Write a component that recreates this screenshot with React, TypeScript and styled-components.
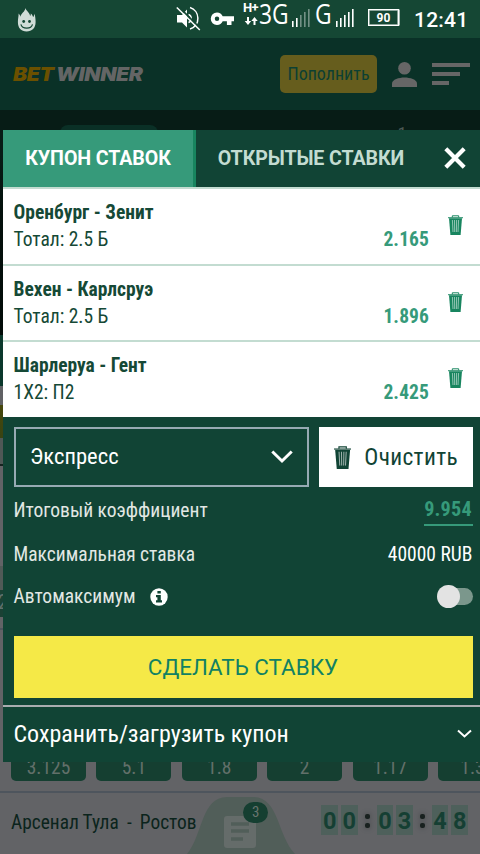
import React from "react";
import styled, { createGlobalStyle, css } from "styled-components";

const condensed = "'Roboto Condensed', Roboto, sans-serif";

const GlobalStyle = createGlobalStyle`
  * { box-sizing: border-box; }
  body { margin: 0; overflow: hidden; background: #626366; }
  button { font: inherit; border: 0; padding: 0; background: none; cursor: pointer; }
`;

const Screen = styled.div`
  position: relative;
  display: flex;
  flex-direction: column;
  width: 480px;
  height: 854px;
  overflow: hidden;
  background: #626366;
  font-family: ${condensed};
  font-size: 19.5px;
  line-height: 24px;
  white-space: nowrap;
`;

/* ---------- status bar ---------- */

const StatusBar = styled.div`
  display: flex;
  align-items: flex-start;
  flex: none;
  height: 38px;
  background: #154734;
  color: #fff;

  svg { flex: none; display: block; }
`;

const StatusItem = styled.div<{ $left: number; $top: number; $width: number }>`
  flex: none;
  width: ${(p) => p.$width}px;
  margin-left: ${(p) => p.$left}px;
  margin-top: ${(p) => p.$top}px;
`;

const Network = styled(StatusItem)`
  font: 400 26.5px/28px "Open Sans", sans-serif;
  transform: scaleX(0.86);
  transform-origin: left;
`;

const DataType = styled(StatusItem)`
  font: 700 13px/13px Roboto, sans-serif;
  letter-spacing: -0.6px;
`;

const Battery = styled(StatusItem)`
  height: 17px;
  border: 1px solid #fff;
  box-shadow: inset 0 0 0 0.7px #b5c6be, 1.5px 0 0 -0.5px #a8bcb3;
  font: 700 12px/16px Roboto, sans-serif;
  letter-spacing: 0.2px;
  text-align: center;
`;

const Clock = styled(StatusItem)`
  font: 500 21px/24px Roboto, sans-serif;
  letter-spacing: 0.2px;
`;

/* ---------- dimmed page ---------- */

const Header = styled.header`
  display: flex;
  align-items: center;
  flex: none;
  height: 72px;
  padding: 0 10px 0 13px;
  background: #0a3127;
`;

const Logo = styled.div`
  flex: 1;
  padding-top: 1px;
  color: #646565;
  font: italic 900 19px/24px Inter, sans-serif;
  letter-spacing: -0.35px;
  transform: scaleX(1.115);
  transform-origin: left;

  span { color: #6b5000; margin-right: 2px; }
`;

const Deposit = styled.button`
  width: 97px;
  height: 38px;
  border-radius: 5px;
  background: #665d1d;
  color: #0c4033;
  font-size: 18px;
  line-height: 38px;
`;

const PersonIcon = styled.svg`
  margin: 0 15px;
`;

const MenuBars = styled.div`
  display: flex;
  flex-direction: column;
  gap: 5px;
  width: 38px;
`;

const Bar = styled.i<{ $width: number }>`
  width: ${(p) => p.$width}px;
  height: 4px;
  background: #666;
`;

const SportStrip = styled.div`
  display: flex;
  justify-content: space-between;
  flex: none;
  height: 225px;
  padding: 15px 73px 0 60px;
  background: linear-gradient(#071c16 0 20%, #03100c 45%, #020b08);
`;

const SportChip = styled.div`
  width: 98px;
  height: 24px;
  border-radius: 8px;
  background: #0a3026;
`;

const SportMark = styled.span`
  color: #4b5854;
  font-size: 19px;
  line-height: 17px;
`;

const Band = styled.div<{ $height: number; $color: string }>`
  flex: none;
  height: ${(p) => p.$height}px;
  background: ${(p) => p.$color};
`;

const HiddenOdd = styled(Band)`
  color: #5f706a;
  line-height: 26px;
  text-indent: -2px;
`;

const OddsRow = styled.div`
  display: flex;
  gap: 10.4px;
  flex: none;
  padding: 0 0 10px 11px;
  border-bottom: 2px solid #4e555d;
`;

const Odd = styled.div`
  flex: none;
  width: 75px;
  height: 38px;
  border-radius: 5px;
  background: #153f31;
  color: #62706a;
  line-height: 49px;
  text-align: center;

  &:last-child { text-indent: -6px; }
`;

const MatchBar = styled.div`
  display: flex;
  justify-content: space-between;
  flex: 1;
  padding: 0 12px 0 11px;
`;

const Teams = styled.div`
  width: 176px;
  padding-top: 18px;
  color: #0b241c;
  font-size: 19.4px;
  word-spacing: -0.4px;
  white-space: pre;
`;

const CouponTab = styled.div`
  position: relative;
  width: 108px;
  margin: 4px 26px 0 0;

  svg { display: block; }
`;

const CouponCount = styled.span`
  position: absolute;
  left: 56px;
  top: 5px;
  width: 25px;
  height: 21px;
  border-radius: 11px;
  background: #153f31;
  color: #69756f;
  font-size: 15px;
  line-height: 20px;
  text-align: center;
`;

const Timer = styled.div`
  display: flex;
  gap: 3px;
  height: 30px;
  margin-top: 12px;
`;

const Digit = styled.span`
  width: 16.6px;
  background: #4e605b;
  color: #153f33;
  font: 700 23.5px/32px Roboto, sans-serif;
  text-align: center;
`;

const Colon = styled.span`
  display: flex;
  flex-direction: column;
  justify-content: center;
  align-items: center;
  gap: 4px;
  width: 13px;
  padding-top: 1px;

  i {
    width: 5px;
    height: 5px;
    border-radius: 2px;
    background: #18211f;
    box-shadow: 0 0 5px #3f4345;
  }
`;

/* ---------- coupon sheet ---------- */

const Sheet = styled.section`
  position: absolute;
  left: 3px;
  top: 130px;
  right: 0;
  height: 632px;
  display: flex;
  flex-direction: column;
  background: #114435;
  color: #e2e8e4;
`;

const Tabs = styled.nav`
  display: flex;
  height: 59px;
  border-bottom: 2px solid #c3dcd1;
`;

const Tab = styled.button<{ $active?: boolean }>`
  flex: none;
  width: ${(p) => (p.$active ? 193 : 230)}px;
  color: #c3dcd1;
  font-family: Roboto, sans-serif;
  font-size: 19.6px;
  font-weight: 700;
  letter-spacing: -0.1px;
  line-height: 56px;
  ${(p) =>
    p.$active &&
    css`
      border-right: 3px solid #18855f;
      background: #369a7a;
      color: #fff;
    `}
`;

const Close = styled.button`
  width: 56px;
  padding: 0 0 2px 3px;
  display: grid;
  place-items: center;
  color: #fff;
`;

const Bet = styled.article`
  display: grid;
  grid-template-columns: 1fr auto 50px;
  grid-template-rows: 27px 27px;
  align-items: center;
  height: 76.5px;
  padding: 10px 1px 0 10.5px;
  border-bottom: 2px solid #c3dcd1;
  background: #fff;
  color: #154936;

  &:last-of-type { border-bottom: 0; height: 75px; }
  &:nth-of-type(2) { padding-top: 10.8px; }
`;

const Match = styled.h3`
  grid-column: 1 / 3;
  margin: 0;
  font-size: 19.5px;
  font-weight: 700;
`;

const Market = styled.span`
  grid-row: 2;
`;

const Coefficient = styled.b`
  grid-row: 2;
  grid-column: 2;
  color: #369a7a;
  font-weight: 700;
  letter-spacing: 0.1px;
`;

const Remove = styled.button`
  grid-row: 1 / 3;
  grid-column: 3;
  display: grid;
  place-items: center;
  padding: 0 0 2px 3.5px;
  color: #18855f;
`;

const Controls = styled.div`
  display: grid;
  grid-template-columns: 295px 154px;
  gap: 10px;
  padding: 10px 7px 0 11px;
  height: 70px;
  font-size: 22.6px;
`;

const Select = styled.button`
  display: flex;
  align-items: center;
  justify-content: space-between;
  padding: 0 14px;
  border: 2px solid #97aab3;
  color: #fff;
`;

const Clear = styled.button`
  display: flex;
  align-items: center;
  justify-content: center;
  gap: 13px;
  background: #fff;
  color: #114435;
`;

const ClearLabel = styled.span`
  letter-spacing: 0.35px;
  font-size: 23.4px;
`;

const Row = styled.div<{ $height: number; $drop?: number }>`
  display: flex;
  align-items: center;
  justify-content: space-between;
  height: ${(p) => p.$height}px;
  padding: ${(p) => p.$drop ?? 0}px 7px 0 10.5px;
`;

const Total = styled.b`
  width: 49px;
  height: 30px;
  padding-right: 1px;
  border-bottom: 2px solid #369a7a;
  color: #369a7a;
  font-size: 20.2px;
  letter-spacing: 0.2px;
  line-height: 26px;
  text-align: center;
`;

const Value = styled.span`
  padding-right: 0.6px;
  color: #fff;
`;

const WithInfo = styled.span`
  display: flex;
  align-items: center;
  gap: 14.5px;
`;

const Switch = styled.button`
  display: flex;
  align-items: center;
  width: 36px;
  height: 17px;
  border-radius: 9px;
  background: linear-gradient(90deg, transparent 8px, #7b978c 8px);

  i {
    width: 22.5px;
    height: 23px;
    border-radius: 50%;
    background: #e3e3e3;
  }
`;

const Submit = styled.button`
  height: 62px;
  margin: 18px 7px 7px 11px;
  padding-right: 1px;
  background: #f5e947;
  color: #128163;
  font-family: Roboto, sans-serif;
  font-size: 22.4px;
  line-height: 60px;
`;

const SaveRow = styled.button`
  display: flex;
  align-items: center;
  justify-content: space-between;
  height: 57px;
  padding: 0 8px 1px 10.5px;
  border-top: 2px solid #a9acaf;
  color: #fff;
  font-size: 24px;
`;

const Trash = ({ size }: { size: number }) => (
  <svg width={(size * 15) / 20} height={size} viewBox="0 0 15 20" fill="none">
    <path d="M4.3 2.4V.8h6.4v1.6" stroke="currentColor" strokeWidth="1" />
    <path d="M0 2h15v1.3H0z" fill="currentColor" opacity=".75" />
    <path d="M1 3.200h13L12.600 20H2.400z" fill="currentColor" />
    <path d="M4.400 5l.6 12M6.500 5l.2 12M8.600 5l-.2 12M10.600 5l-.6 12" stroke="#fff" strokeWidth=".8" opacity=".65" />
  </svg>
);

const Signal = ({ strength }: { strength: number }) => (
  <svg width="19" height="18" viewBox="0 0 19 18" fill="#fff">
    {[0, 1, 2, 3, 4].map((i) => (
      <rect key={i} x={i * 4} y={12 - i * 3} width="1.6" height={6 + i * 3} opacity={i < strength ? 1 : 0.4} />
    ))}
  </svg>
);

const bets = [
  { match: "Оренбург - Зенит", market: "Тотал: 2.5 Б", odd: "2.165" },
  { match: "Вехен - Карлсруэ", market: "Тотал: 2.5 Б", odd: "1.896" },
  { match: "Шарлеруа - Гент", market: "1X2: П2", odd: "2.425" },
];

export default function App() {
  return (
    <Screen>
      <GlobalStyle />
      <StatusBar>
        <StatusItem $left={17} $top={8} $width={20}>
          <svg width="20" height="24" viewBox="0 0 20 24">
            <path
              d="M8.500 0c.4 2.700 4.400 4.500 4.600 8 .6-.6.8-1.500.7-2.600 1.300 1 2 2.300 2.300 3.700.9-.8 1-2 1.700-3.300.2 2.700.8 4.600.8 8.200C18.600 20 15 23.500 9.600 23.500S.9 20 .9 14C.9 10.500 1.700 8.500 1.600 5.600c1 1 1.600 2.100 1.900 3.200C4 5 7.800 4.200 8.500 0z"
              fill="#d0dcd7"
            />
            <circle cx="6.700" cy="13.500" r="1.400" fill="#154734" />
            <circle cx="12.500" cy="13.500" r="1.400" fill="#154734" />
            <path d="M3.900 16.300c1.300 5 10.300 5 11.600 0" fill="none" stroke="#154734" strokeWidth="1.200" />
          </svg>
        </StatusItem>
        <StatusItem $left={139} $top={6} $width={25}>
          <svg width="25" height="25" viewBox="0 0 25 25" fill="none" stroke="#fff">
            <path d="M1 9h5l5-5.500v18L6 16.500H1z" fill="#fff" stroke="none" />
            <path d="M12.500 8.500a4.300 4.300 0 0 1 0 8" strokeWidth="1.600" />
            <path d="M14 1.500c10 3 11 18 0 21.500" strokeWidth="1.500" />
            <path d="M2.500.5l23 23" stroke="#154734" strokeWidth="1.800" />
            <path d="M.8 1.500l23 22.500" strokeWidth="1.500" />
          </svg>
        </StatusItem>
        <StatusItem $left={9} $top={12} $width={25}>
          <svg width="25" height="14" viewBox="0 0 25 14">
            <path
              fillRule="evenodd"
              fill="#fff"
              d="M7 .5c2.700 0 4.700 1.500 5.700 3.800H24v4.900h-2.500V13h-4.600V9.200h-4.200C11.700 11.500 9.700 13 7 13A6.200 6.200 0 1 1 7 .5zm0 4a2.200 2.200 0 1 0 0 4.500 2.200 2.200 0 0 0 0-4.500z"
            />
          </svg>
        </StatusItem>
        <DataType $left={8} $top={1} $width={17}>
          H+
          <svg width="15" height="12" viewBox="0 0 15 12" fill="#fff">
            <path d="M4 3h2v4h2.200L5 11 1.700 7H4zM10.500 11h2V7h2.200L11.500 3 8.300 7h2.200z" />
          </svg>
        </DataType>
        <Network $left={-1} $top={0} $width={32}>3G</Network>
        <StatusItem $left={1} $top={9} $width={19}>
          <Signal strength={2} />
        </StatusItem>
        <Network $left={4} $top={0} $width={20}>G</Network>
        <StatusItem $left={1} $top={9} $width={19}>
          <Signal strength={5} />
        </StatusItem>
        <Battery $left={13} $top={9} $width={31}>90</Battery>
        <Clock $left={15} $top={8} $width={60}>12:41</Clock>
      </StatusBar>

      <Header>
        <Logo>
          <span>BET</span>WINNER
        </Logo>
        <Deposit>Пополнить</Deposit>
        <PersonIcon width="25" height="25" viewBox="0 0 25 25" fill="#666">
          <circle cx="12.500" cy="6.300" r="6.300" />
          <path d="M0 25v-3.500C0 17.500 7 15.500 12.500 15.500S25 17.500 25 21.500V25z" />
        </PersonIcon>
        <MenuBars>
          <Bar $width={38} />
          <Bar $width={28} />
          <Bar $width={17} />
        </MenuBars>
      </Header>

      <SportStrip>
        <SportChip />
        <SportMark>1</SportMark>
      </SportStrip>
      <Band $height={51} $color="#0b382c" />
      <Band $height={19} $color="#606164" />
      <Band $height={33} $color="linear-gradient(#47480c, #394312)" />
      <Band $height={26} $color="#4f5856" />
      <Band $height={2} $color="#15231f" />
      <Band $height={100} $color="#626366" />
      <Band $height={24} $color="#505a57" />
      <HiddenOdd $height={27} $color="#1a4134">2</HiddenOdd>
      <Band $height={11} $color="#626366" />
      <Band $height={2} $color="#4e555d" />
      <Band $height={113} $color="#626366" />
      <OddsRow>
        {["3.125", "5.1", "1.8", "2", "1.17", "1.3"].map((odd) => (
          <Odd key={odd}>{odd}</Odd>
        ))}
      </OddsRow>
      <MatchBar>
        <Teams>{"Арсенал Тула  -  Ростов"}</Teams>
        <CouponTab>
          <svg width="108" height="57" viewBox="0 0 108 57">
            <path d="M0 57C16 38 14 0 40 0h26c26 0 24 38 42 57z" fill="#515e59" />
            <rect x="37" y="19" width="32" height="32" rx="3" fill="#656c6a" />
            <path d="M44 27h18M44 34h18M44 42h12" stroke="#515e59" strokeWidth="3.500" />
          </svg>
          <CouponCount>3</CouponCount>
        </CouponTab>
        <Timer>
          <Digit>0</Digit>
          <Digit>0</Digit>
          <Colon><i /><i /></Colon>
          <Digit>0</Digit>
          <Digit>3</Digit>
          <Colon><i /><i /></Colon>
          <Digit>4</Digit>
          <Digit>8</Digit>
        </Timer>
      </MatchBar>

      <Sheet>
        <Tabs>
          <Tab $active>КУПОН СТАВОК</Tab>
          <Tab>ОТКРЫТЫЕ СТАВКИ</Tab>
          <Close aria-label="Закрыть">
            <svg width="22" height="22" viewBox="0 0 22 22" stroke="currentColor" strokeWidth="4.200">
              <path d="M1.800 1.800l18.400 18.400M20.200 1.800L1.800 20.200" />
            </svg>
          </Close>
        </Tabs>
        {bets.map((bet) => (
          <Bet key={bet.match}>
            <Match>{bet.match}</Match>
            <Market>{bet.market}</Market>
            <Coefficient>{bet.odd}</Coefficient>
            <Remove aria-label="Удалить">
              <Trash size={20} />
            </Remove>
          </Bet>
        ))}
        <Controls>
          <Select>
            Экспресс
            <svg width="22" height="14" viewBox="0 0 22 14" fill="none" stroke="#fff" strokeWidth="3">
              <path d="M1.300 1.500L11 11l9.700-9.500" />
            </svg>
          </Select>
          <Clear>
            <Trash size={23} />
            <ClearLabel>Очистить</ClearLabel>
          </Clear>
        </Controls>
        <Row $height={46} $drop={2}>
          <span>Итоговый коэффициент</span>
          <Total>9.954</Total>
        </Row>
        <Row $height={42} $drop={2}>
          <span>Максимальная ставка</span>
          <Value>40000 RUB</Value>
        </Row>
        <Row $height={43}>
          <WithInfo>
            Автомаксимум
            <svg width="18" height="18" viewBox="0 0 18 18">
              <circle cx="9" cy="9" r="8.700" fill="#fff" />
              <path d="M7.400 2.900h3.400v2.600H7.400zM6 7h4.800v5.300H12v2.200H6v-2.200h1.400V9.200H6z" fill="#114435" />
            </svg>
          </WithInfo>
          <Switch aria-label="Автомаксимум"><i /></Switch>
        </Row>
        <Submit>СДЕЛАТЬ СТАВКУ</Submit>
        <SaveRow>
          Сохранить/загрузить купон
          <svg width="15" height="10" viewBox="0 0 15 10" fill="none" stroke="#fff" strokeWidth="2">
            <path d="M1 1.500l6.500 6 6.500-6" />
          </svg>
        </SaveRow>
      </Sheet>
    </Screen>
  );
}
